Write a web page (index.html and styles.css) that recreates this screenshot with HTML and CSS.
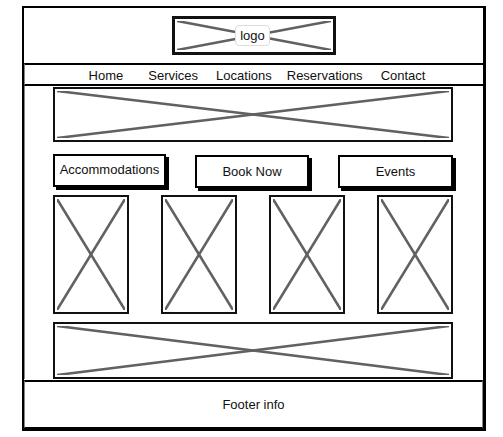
FILE: index.html
```html
<!DOCTYPE html>
<html lang="en">

<head>
    <meta charset="UTF-8">
    <meta name="viewport" content="width=device-width, initial-scale=1.0">
    <title>Wireframe</title>
    <link rel="stylesheet" href="styles.css">
</head>

<body>
    <div class="frame">
        <header class="header">
            <div class="ph logo">
                <svg class="cross" viewBox="0 0 100 100" preserveAspectRatio="none">
                    <line x1="0" y1="0" x2="100" y2="100" />
                    <line x1="0" y1="100" x2="100" y2="0" />
                </svg>
                <span class="logo-label">logo</span>
            </div>
        </header>

        <nav class="nav">
            <a href="javascript:;">Home</a>
            <a href="javascript:;">Services</a>
            <a href="javascript:;">Locations</a>
            <a href="javascript:;">Reservations</a>
            <a href="javascript:;">Contact</a>
        </nav>

        <main class="main">
            <div class="ph hero">
                <svg class="cross" viewBox="0 0 100 100" preserveAspectRatio="none">
                    <line x1="0" y1="0" x2="100" y2="100" />
                    <line x1="0" y1="100" x2="100" y2="0" />
                </svg>
            </div>

            <div class="buttons">
                <a href="javascript:;" class="btn btn-first">Accommodations</a>
                <a href="javascript:;" class="btn">Book Now</a>
                <a href="javascript:;" class="btn">Events</a>
            </div>

            <div class="tiles">
                <div class="ph tile">
                    <svg class="cross" viewBox="0 0 100 100" preserveAspectRatio="none">
                        <line x1="0" y1="0" x2="100" y2="100" />
                        <line x1="0" y1="100" x2="100" y2="0" />
                    </svg>
                </div>
                <div class="ph tile">
                    <svg class="cross" viewBox="0 0 100 100" preserveAspectRatio="none">
                        <line x1="0" y1="0" x2="100" y2="100" />
                        <line x1="0" y1="100" x2="100" y2="0" />
                    </svg>
                </div>
                <div class="ph tile">
                    <svg class="cross" viewBox="0 0 100 100" preserveAspectRatio="none">
                        <line x1="0" y1="0" x2="100" y2="100" />
                        <line x1="0" y1="100" x2="100" y2="0" />
                    </svg>
                </div>
                <div class="ph tile">
                    <svg class="cross" viewBox="0 0 100 100" preserveAspectRatio="none">
                        <line x1="0" y1="0" x2="100" y2="100" />
                        <line x1="0" y1="100" x2="100" y2="0" />
                    </svg>
                </div>
            </div>

            <div class="ph banner">
                <svg class="cross" viewBox="0 0 100 100" preserveAspectRatio="none">
                    <line x1="0" y1="0" x2="100" y2="100" />
                    <line x1="0" y1="100" x2="100" y2="0" />
                </svg>
            </div>
        </main>

        <footer class="footer">Footer info</footer>
    </div>
</body>

</html>
```

FILE: styles.css
```css
* {
    box-sizing: border-box;
}

html,
body {
    margin: 0;
    background-color: #fff;
}

body {
    font-family: "Liberation Sans", Arial, sans-serif;
    font-size: 13px;
    color: #111;
}

a {
    text-decoration: none;
    color: #111;
}

/* 外框 */
.frame {
    width: 464px;
    height: 425px;
    margin: 6px 0 0 22px;
    border: 2px solid #000;
    border-right-width: 3px;
    border-bottom-width: 3px;
    display: flex;
    flex-direction: column;
}

/* 占位图：黑框 + 灰色叉 */
.ph {
    border: 2px solid #111;
    padding: 2px;
    background-color: #fff;
}

.cross {
    display: block;
    width: 100%;
    height: 100%;
}

.cross line {
    stroke: #616161;
    stroke-width: 2.6;
    vector-effect: non-scaling-stroke;
}

.header {
    height: 55px;
    display: flex;
    justify-content: center;
    align-items: center;
}

.logo {
    width: 164px;
    height: 39px;
    border-width: 3px;
    display: grid;
    place-items: center;
}

.logo .cross,
.logo .logo-label {
    grid-area: 1 / 1;
}

.logo-label {
    padding: 0 4px;
    height: 21px;
    line-height: 19px;
    border: 1px solid #ddd;
    border-radius: 4px;
    background-color: #fff;
    margin-left: -2px;
}

.nav {
    height: 23px;
    border-top: 2px solid #000;
    border-bottom: 2px solid #000;
    border-left: 1px solid #888;
    display: flex;
    justify-content: center;
    align-items: center;
    gap: 18px;
    padding: 1px 0 0 6px;
}

.nav a:first-child {
    margin-right: 7px;
}

.nav a:nth-child(3) {
    margin-right: -3px;
}

.main {
    padding: 1px 30px 0 28px;
    border-left: 1px solid #888;
}

.hero {
    height: 55px;
}

.buttons {
    margin-top: 12px;
    display: flex;
    justify-content: space-between;
    align-items: flex-start;
}

.btn {
    width: 114px;
    height: 33px;
    margin-top: 1px;
    border: 2px solid #000;
    box-shadow: 3px 3px 0 #000;
    display: flex;
    justify-content: center;
    align-items: center;
    background-color: #fff;
}

.btn-first {
    width: 113px;
    margin-top: 0;
    padding-bottom: 3px;
}

.btn:last-child {
    width: 115px;
}

.tiles {
    margin-top: 7px;
    display: flex;
    justify-content: space-between;
}

.tile {
    width: 76px;
    height: 119px;
}

.banner {
    margin-top: 8px;
    height: 57px;
}

.footer {
    flex: 1;
    margin-top: 1px;
    border-top: 2px solid #000;
    border-left: 1px solid #888;
    border-right: 1px solid #888;
    border-bottom: 1px solid #000;
    display: flex;
    justify-content: center;
    align-items: center;
}
```
